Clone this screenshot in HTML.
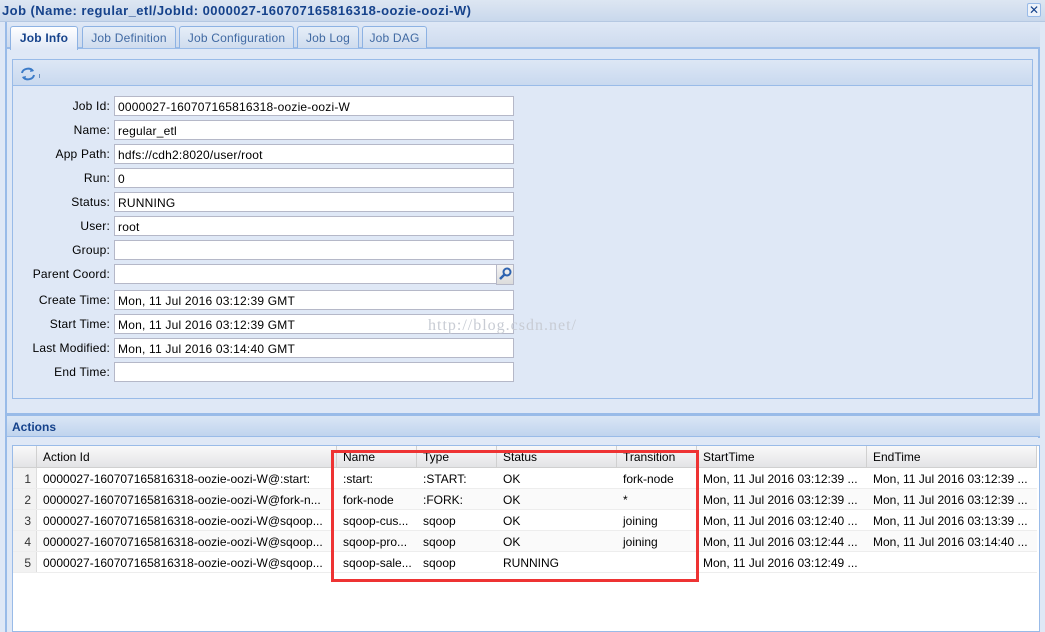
<!DOCTYPE html>
<html><head><meta charset="utf-8"><style>
*{box-sizing:border-box;margin:0;padding:0}
body{width:1045px;height:632px;overflow:hidden;background:#dfe8f6;font-family:"Liberation Sans",Arial,sans-serif;font-size:12px;position:relative;color:#000}
.a{position:absolute}
.title{left:0;top:0;width:1045px;height:22px;background:linear-gradient(#dde6f2,#c9d8ec);font-weight:bold;font-size:13px;letter-spacing:0.45px;color:#15428b;padding:3px 0 0 2px;border-bottom:1px solid #b5c8e2}
.close{left:1027px;top:3px;width:14px;height:14px;border:1px solid #99bbe8;background:#eef3fa;color:#15428b;font-size:12px;line-height:12px;text-align:center;border-radius:2px}
.win{left:5px;top:22px;width:1035px;height:610px;border-left:2px solid #99bbe8;border-right:2px solid #99bbe8;background:#dfe8f6}
.tabs{left:7px;top:22px;width:1033px;height:27px;background:linear-gradient(#dfe8f6,#cedbee);border-bottom:2px solid #99bbe8}
.tab{top:26px;height:22px;border:1px solid #8db2e3;border-bottom:none;background:linear-gradient(#e6eef8,#cfdcee);color:#416aa3;font-size:12px;padding:4px 0 0 0;text-align:center;border-radius:3px 3px 0 0;letter-spacing:0.2px}
.tab.on{background:linear-gradient(#fff,#dfe8f6);color:#15428b;font-weight:bold;height:24px}
.fs{left:12px;top:59px;width:1021px;height:340px;border:1px solid #99bbe8;background:#dfe8f6}
.tb{left:13px;top:60px;width:1019px;height:26px;background:linear-gradient(#dde7f5,#c9d9ef);border-bottom:1px solid #99bbe8}
.lbl{width:110px;text-align:right;left:0;color:#000;letter-spacing:0.2px}
.inp{left:114px;width:400px;height:20px;background:#fff;border:1px solid #b5b8c8;padding:3px 0 0 3px;white-space:nowrap;letter-spacing:0.2px}
.act{left:7px;top:413px;width:1033px;height:24px;background:linear-gradient(#dae6f5,#c0d4ee);border-top:3px solid #99bbe8;border-bottom:1px solid #99bbe8;color:#15428b;font-weight:bold;font-size:12px;padding:4px 0 0 5px}
.gridbg{left:7px;top:438px;width:1033px;height:194px;background:#dfe8f6}
.grid{left:12px;top:445px;width:1028px;height:187px;background:#fff;border:1px solid #99bbe8}
.hd{top:446px;height:22px;background:linear-gradient(#f9f9f9,#e3e4e6);border-right:1px solid #d0d0d0;border-bottom:1px solid #d0d0d0;padding:4px 0 0 6px;color:#000}
.row{left:13px;width:1024px;height:21px;border-bottom:1px solid #ededed}
.c{top:0;height:20px;padding:4px 0 0 6px;white-space:nowrap;overflow:hidden}
.n{left:0;width:24px;background:#f2f2f2;text-align:right;padding-right:5px;color:#333;border-right:1px solid #ddd}
</style></head><body>
<div class="a title">Job (Name: regular_etl/JobId: 0000027-160707165816318-oozie-oozi-W)</div>
<div class="a close">✕</div>
<div class="a win"></div>
<div class="a tabs"></div>
<div class="a tab on" style="left:10px;width:68px">Job Info</div>
<div class="a tab" style="left:82px;width:94px">Job Definition</div>
<div class="a tab" style="left:179px;width:115px">Job Configuration</div>
<div class="a tab" style="left:297px;width:62px">Job Log</div>
<div class="a tab" style="left:362px;width:65px">Job DAG</div>
<div class="a fs"></div>
<div class="a tb"><svg width="22" height="20" style="position:absolute;left:6px;top:4px" viewBox="0 0 22 20"><path d="M3 9a6 5 0 0 1 11-2" fill="none" stroke="#3b7bc8" stroke-width="2"/><path d="M12 4l3 3-4 1z" fill="#3b7bc8"/><path d="M15 11a6 5 0 0 1-11 2" fill="none" stroke="#3b7bc8" stroke-width="2"/><path d="M6 16l-3-3 4-1z" fill="#3b7bc8"/><rect x="20" y="10" width="1" height="4" fill="#6a8fc0"/></svg></div>

<div class="a lbl" style="top:99px">Job Id:</div><div class="a inp" style="top:96px">0000027-160707165816318-oozie-oozi-W</div>
<div class="a lbl" style="top:123px">Name:</div><div class="a inp" style="top:120px">regular_etl</div>
<div class="a lbl" style="top:147px">App Path:</div><div class="a inp" style="top:144px">hdfs://cdh2:8020/user/root</div>
<div class="a lbl" style="top:171px">Run:</div><div class="a inp" style="top:168px">0</div>
<div class="a lbl" style="top:195px">Status:</div><div class="a inp" style="top:192px">RUNNING</div>
<div class="a lbl" style="top:219px">User:</div><div class="a inp" style="top:216px">root</div>
<div class="a lbl" style="top:243px">Group:</div><div class="a inp" style="top:240px"></div>
<div class="a lbl" style="top:267px">Parent Coord:</div><div class="a inp" style="top:264px;width:383px"></div>
<div class="a" style="left:496px;top:264px;width:18px;height:21px;border:1px solid #b5b8c8;background:linear-gradient(#f4f4f4,#dcdcdc)"><svg width="16" height="18" viewBox="0 0 16 18"><circle cx="10" cy="7" r="3.5" fill="none" stroke="#2e63b0" stroke-width="2"/><path d="M7.5 9.5L3 14" stroke="#2e63b0" stroke-width="2.5"/></svg></div>
<div class="a lbl" style="top:293px">Create Time:</div><div class="a inp" style="top:290px">Mon, 11 Jul 2016 03:12:39 GMT</div>
<div class="a lbl" style="top:317px">Start Time:</div><div class="a inp" style="top:314px">Mon, 11 Jul 2016 03:12:39 GMT</div>
<div class="a lbl" style="top:341px">Last Modified:</div><div class="a inp" style="top:338px">Mon, 11 Jul 2016 03:14:40 GMT</div>
<div class="a lbl" style="top:365px">End Time:</div><div class="a inp" style="top:362px"></div>
<div class="a" style="left:428px;top:317px;color:#c8ccd4;font-family:'Liberation Serif',serif;font-size:16px;letter-spacing:1px">http://blog.csdn.net/</div>

<div class="a act">Actions</div>
<div class="a gridbg"></div>
<div class="a grid"></div>
<div class="a hd" style="left:13px;width:24px"></div>
<div class="a hd" style="left:37px;width:300px">Action Id</div>
<div class="a hd" style="left:337px;width:80px">Name</div>
<div class="a hd" style="left:417px;width:80px">Type</div>
<div class="a hd" style="left:497px;width:120px">Status</div>
<div class="a hd" style="left:617px;width:80px">Transition</div>
<div class="a hd" style="left:697px;width:170px">StartTime</div>
<div class="a hd" style="left:867px;width:170px">EndTime</div>

<div class="a row" style="top:468px"><div class="a c n">1</div><div class="a c" style="left:24px;width:300px">0000027-160707165816318-oozie-oozi-W@:start:</div><div class="a c" style="left:324px;width:80px">:start:</div><div class="a c" style="left:404px;width:80px">:START:</div><div class="a c" style="left:484px;width:120px">OK</div><div class="a c" style="left:604px;width:80px">fork-node</div><div class="a c" style="left:684px;width:170px">Mon, 11 Jul 2016 03:12:39 ...</div><div class="a c" style="left:854px;width:170px">Mon, 11 Jul 2016 03:12:39 ...</div></div>
<div class="a row" style="top:489px;background:#fafafa"><div class="a c n">2</div><div class="a c" style="left:24px;width:300px">0000027-160707165816318-oozie-oozi-W@fork-n...</div><div class="a c" style="left:324px;width:80px">fork-node</div><div class="a c" style="left:404px;width:80px">:FORK:</div><div class="a c" style="left:484px;width:120px">OK</div><div class="a c" style="left:604px;width:80px">*</div><div class="a c" style="left:684px;width:170px">Mon, 11 Jul 2016 03:12:39 ...</div><div class="a c" style="left:854px;width:170px">Mon, 11 Jul 2016 03:12:39 ...</div></div>
<div class="a row" style="top:510px"><div class="a c n">3</div><div class="a c" style="left:24px;width:300px">0000027-160707165816318-oozie-oozi-W@sqoop...</div><div class="a c" style="left:324px;width:80px">sqoop-cus...</div><div class="a c" style="left:404px;width:80px">sqoop</div><div class="a c" style="left:484px;width:120px">OK</div><div class="a c" style="left:604px;width:80px">joining</div><div class="a c" style="left:684px;width:170px">Mon, 11 Jul 2016 03:12:40 ...</div><div class="a c" style="left:854px;width:170px">Mon, 11 Jul 2016 03:13:39 ...</div></div>
<div class="a row" style="top:531px;background:#fafafa"><div class="a c n">4</div><div class="a c" style="left:24px;width:300px">0000027-160707165816318-oozie-oozi-W@sqoop...</div><div class="a c" style="left:324px;width:80px">sqoop-pro...</div><div class="a c" style="left:404px;width:80px">sqoop</div><div class="a c" style="left:484px;width:120px">OK</div><div class="a c" style="left:604px;width:80px">joining</div><div class="a c" style="left:684px;width:170px">Mon, 11 Jul 2016 03:12:44 ...</div><div class="a c" style="left:854px;width:170px">Mon, 11 Jul 2016 03:14:40 ...</div></div>
<div class="a row" style="top:552px"><div class="a c n">5</div><div class="a c" style="left:24px;width:300px">0000027-160707165816318-oozie-oozi-W@sqoop...</div><div class="a c" style="left:324px;width:80px">sqoop-sale...</div><div class="a c" style="left:404px;width:80px">sqoop</div><div class="a c" style="left:484px;width:120px">RUNNING</div><div class="a c" style="left:604px;width:80px"></div><div class="a c" style="left:684px;width:170px">Mon, 11 Jul 2016 03:12:49 ...</div></div>

<div class="a" style="left:331px;top:450px;width:368px;height:132px;border:3px solid #ee3333"></div>
</body></html>
